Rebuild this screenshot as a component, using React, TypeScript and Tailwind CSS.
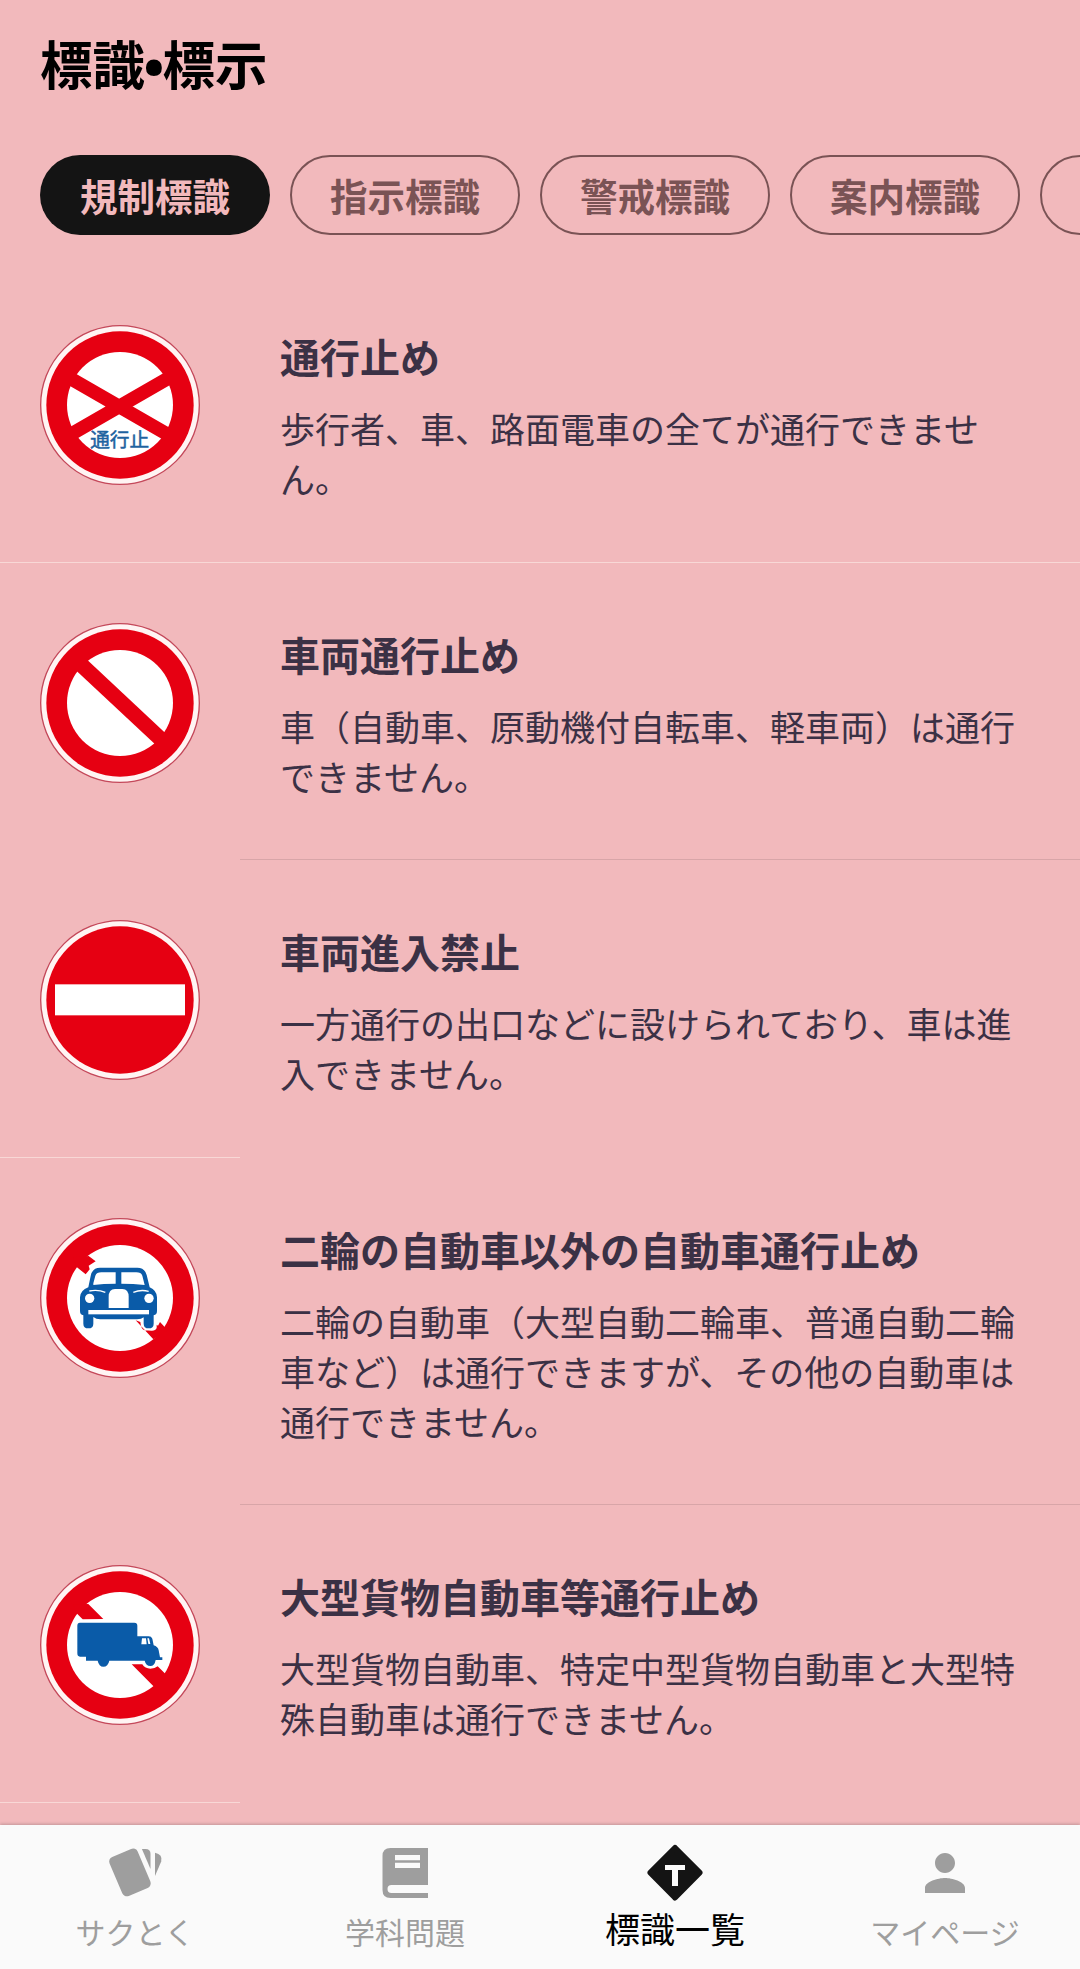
import { useState } from "react"
import type { ReactNode } from "react"
import { MdPerson } from "react-icons/md"

const RED = "#e60012"
const BLUE = "#0a5ba8"

const TABS = ["規制標識", "指示標識", "警戒標識", "案内標識", ""]

function SignBase({ children, solid = false }: { children: ReactNode; solid?: boolean }) {
    return (
        <svg viewBox="0 0 480 480" className="block size-40 shrink-0">
            <circle cx="240" cy="240" r="238" fill="#fff4f3" stroke="#c4485a" strokeWidth="4" />
            <circle cx="240" cy="240" r="221" fill={RED} />
            {!solid && <circle cx="240" cy="240" r="159" fill="#fff" />}
            {children}
        </svg>
    )
}

function ClosedSign() {
    return (
        <SignBase>
            <path d="M91 160 L384 329 M384 160 L91 329" stroke={RED} strokeWidth="41" fill="none" />
            <text
                x="239"
                y="366"
                textAnchor="middle"
                fontSize="59"
                fill="#1f63a0"
                stroke="#1f63a0"
                strokeWidth="1.5"
                className="font-['Noto_Sans_CJK_JP',sans-serif]"
            >
                通行止
            </text>
        </SignBase>
    )
}

function NoVehiclesSign() {
    return (
        <SignBase>
            <path d="M120 122 L365 351" stroke={RED} strokeWidth="46" />
        </SignBase>
    )
}

function NoEntrySign() {
    return (
        <SignBase solid>
            <rect x="45" y="193" width="390" height="93" fill="#fff" />
        </SignBase>
    )
}

function NoCarsSign() {
    return (
        <SignBase>
            <path d="M100 118 L146 114 L167 130 L146 143 L149 154 L137 169 L109 146Z" fill={RED} />
            <path d="M287 307 L340 364 L385 335 L374 327 L360 312 L354 323 L350 320 L350 330 Q346 339 334 338 L314 337 Q303 334 301 312Z" fill={RED} />
            {/* body, roof and wheels */}
            <path
                d="M145 208 L152 174 Q157 149 180 149 H292 Q314 149 320 171 L329 208 Q350 217 351 238 V279 Q351 290 341 292 V317 Q341 331 326 331 Q311 331 311 317 V298 Q305 304 291 304 H181 Q168 304 160 297 V317 Q160 331 145 331 Q130 331 130 317 V292 Q120 290 120 279 V238 Q121 217 145 208Z"
                fill={BLUE}
            />
            <path d="M160 196 L166 173 Q170 163 184 163 H227 V197 Q190 197 160 201Z" fill="#fff" />
            <path d="M244 163 H289 Q303 163 307 173 L314 201 Q280 197 244 197Z" fill="#fff" />
            <path d="M206 270 V237 Q206 213 225 213 H247 Q266 213 266 237 V270Z" fill="#fff" />
            <rect x="145" y="276" width="182" height="13" fill="#fff" />
            <circle cx="149" cy="241" r="14" fill="#fff" />
            <circle cx="327" cy="241" r="14" fill="#fff" />
            <path d="M148 219 Q174 214 196 223 M280 223 Q302 214 326 220" stroke="#fff" strokeWidth="4" fill="none" />
        </SignBase>
    )
}

function NoTrucksSign() {
    return (
        <SignBase>
            <path d="M100 118 L145 117 L190 162 L128 163 L109 144Z" fill={RED} />
            <path d="M275 298 L307 298 Q315 311 331 311 Q345 311 353 304 L385 335 L342 365Z" fill={RED} />
            <path
                d="M120 173 H283 Q292 173 292 182 V214 H326 Q334 214 337 221 L341 241 Q354 245 356 256 L360 277 H367 V285 H347 Q344 303 331 303 Q318 303 314 287 H208 Q204 305 190 305 Q177 305 173 287 H138 V275 H120 Q112 275 112 265 V182 Q112 173 120 173Z"
                fill={BLUE}
            />
            <path d="M304 238 L306 220 H318 L320 238Z M322 220 H327 L331 237 H325Z" fill="#fff" />
        </SignBase>
    )
}

const SIGNS = [
    {
        title: "通行止め",
        text: "歩行者、車、路面電車の全てが通行できません。",
        icon: <ClosedSign />,
        divider: "full",
    },
    {
        title: "車両通行止め",
        text: "車（自動車、原動機付自転車、軽車両）は通行できません。",
        icon: <NoVehiclesSign />,
        divider: "right",
    },
    {
        title: "車両進入禁止",
        text: "一方通行の出口などに設けられており、車は進入できません。",
        icon: <NoEntrySign />,
        divider: "left",
    },
    {
        title: "二輪の自動車以外の自動車通行止め",
        text: "二輪の自動車（大型自動二輪車、普通自動二輪車など）は通行できますが、その他の自動車は通行できません。",
        icon: <NoCarsSign />,
        divider: "right",
    },
    {
        title: "大型貨物自動車等通行止め",
        text: "大型貨物自動車、特定中型貨物自動車と大型特殊自動車は通行できません。",
        icon: <NoTrucksSign />,
        divider: "left",
    },
]

const DIVIDERS: Record<string, string> = {
    full: "w-full bg-[#f8d8d6]",
    left: "w-60 bg-[#f8d8d6]",
    right: "ml-60 bg-[#d8a5a8]",
}

function CardsIcon() {
    return (
        <svg viewBox="0 0 60 60" className="size-[60px]" fill="currentColor">
            <rect x="9.7" y="8.2" width="30.5" height="42.4" rx="5" transform="rotate(-23 24.95 29.4)" />
            <path d="M36.9 6 H40.5 Q45.5 6 45.5 11 V26Z" />
            <path d="M50 9.7 Q58 11.5 56.2 18.5 L50 33Z" />
        </svg>
    )
}

function BookIcon() {
    return (
        <svg viewBox="0 0 60 60" className="size-[60px]" fill="currentColor">
            <path
                fillRule="evenodd"
                d="M15.5 5 H53 V42 H16.5 A4 4 0 0 0 16.5 50 H53 V55 H15.5 Q7.5 55 7.5 47 V13 Q7.5 5 15.5 5Z M20 12 V17.3 H45 V12Z M20 19.7 V25 H45 V19.7Z"
            />
        </svg>
    )
}

function SignIcon() {
    return (
        <svg viewBox="0 0 60 60" className="size-[60px]">
            <path d="M30 5 L54.5 29.7 L30 54.5 L5.5 29.7Z" fill="#141414" stroke="#141414" strokeWidth="6" strokeLinejoin="round" />
            <rect x="20" y="22" width="20" height="5" fill="#fafafa" />
            <rect x="27" y="22" width="6" height="21" fill="#fafafa" />
        </svg>
    )
}

const NAV = [
    { label: "サクとく", icon: <CardsIcon /> },
    { label: "学科問題", icon: <BookIcon /> },
    { label: "標識一覧", icon: <SignIcon /> },
    { label: "マイページ", icon: <MdPerson className="size-[60px]" /> },
]

export default function App() {
    const [tab, setTab] = useState(TABS[0])
    const [page, setPage] = useState("標識一覧")

    return (
        <div
            lang="ja"
            className="flex h-[1969px] w-[1080px] flex-col overflow-hidden bg-[#f2b9bc] font-['Noto_Sans_CJK_JP',sans-serif]"
        >
            {/* HEADER */}
            <h1 className="flex h-[105px] px-10 pt-[23px] text-[52.5px] leading-[78px] font-bold text-black">
                標識
                <span className="flex w-[17.5px] justify-center pt-2 font-[Roboto,sans-serif] text-[68px]">•</span>
                標示
            </h1>

            {/* CATEGORY TABS */}
            <div className="mt-[50px] flex shrink-0 gap-5 overflow-hidden px-10">
                {TABS.map(name => (
                    <button
                        key={name}
                        onClick={() => setTab(name)}
                        className={`flex h-20 w-[230px] shrink-0 items-center justify-center rounded-full text-[37.5px] leading-none font-bold ${tab === name
                                ? "bg-[#141414] text-[#f2b9bc]"
                                : "border-[2.5px] border-[#7a5355] text-[#7a5355]"
                            }`}
                    >
                        {name}
                    </button>
                ))}
            </div>

            {/* SIGN LIST */}
            <main className="mt-[30px] flex-1 overflow-hidden">
                {SIGNS.map(sign => (
                    <section key={sign.title}>
                        <div className="flex gap-20 px-10 pt-[60px] pb-[56.5px]">
                            {sign.icon}
                            <div className="flex-1 pb-0.5 text-[#3b3145]">
                                <h2 className="pt-px text-[40px] leading-[60px] font-bold">{sign.title}</h2>
                                <p className="mt-[17px] text-[35px] leading-[50px]">{sign.text}</p>
                            </div>
                        </div>
                        <div className={`h-px ${DIVIDERS[sign.divider]}`} />
                    </section>
                ))}
            </main>

            {/* BOTTOM NAVIGATION */}
            <nav className="relative grid h-36 shrink-0 grid-cols-4 bg-[#fafafa] shadow-[0_-1px_3px_rgba(0,0,0,0.2)]">
                {NAV.map(item => (
                    <button
                        key={item.label}
                        onClick={() => setPage(item.label)}
                        className={`flex flex-col items-center pt-[18px] ${page === item.label ? "text-black" : "text-[#9e9e9e]"}`}
                    >
                        {item.icon}
                        <span
                            className={page === item.label
                                ? "mt-px text-[35px] leading-[47px]"
                                : "mt-1.5 text-[30px] leading-[44px]"}
                        >
                            {item.label}
                        </span>
                    </button>
                ))}
            </nav>
        </div>
    )
}
